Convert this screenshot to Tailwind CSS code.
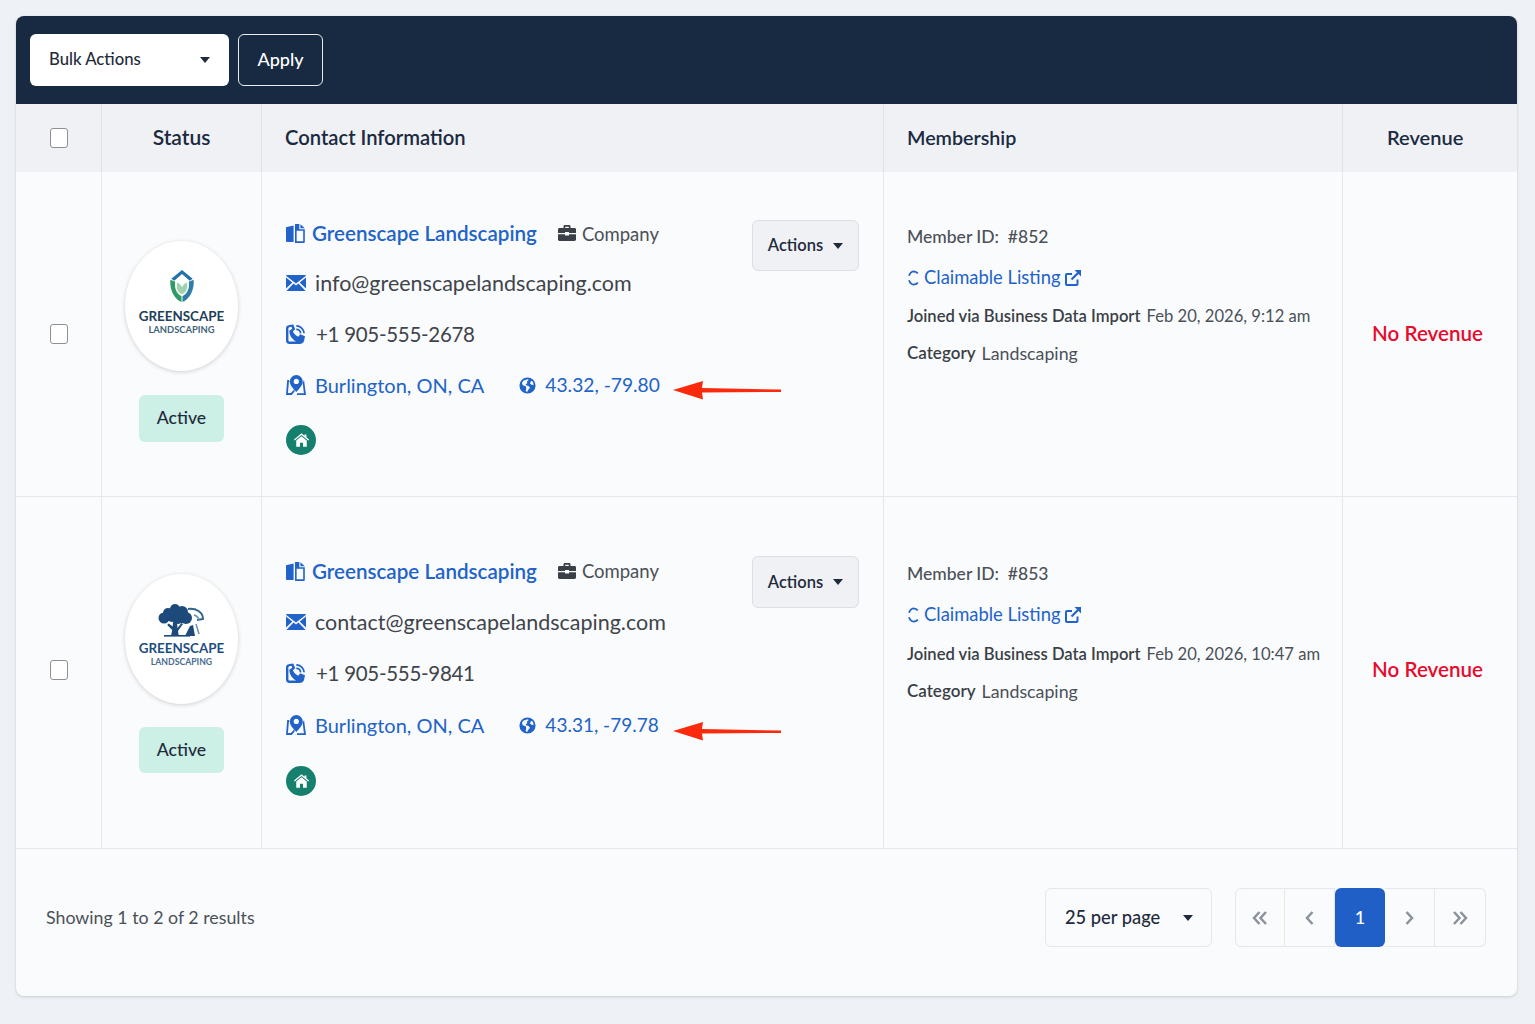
<!DOCTYPE html>
<html><head><meta charset="utf-8"><script src="https://cdn.jsdelivr.net/npm/@tailwindcss/browser@4"></script></head>
<body class="bg-[#eef1f5] [font-family:Lato,sans-serif] text-[#1f2b3c]">
<svg width="0" height="0" class="absolute">
<defs>
<symbol id="biz" viewBox="0 0 20 20"><path fill="currentColor" d="M0 3.500 8 1.500V19H1a1 1 0 0 1-1-1z"/><path fill="currentColor" d="M9.500 0h4.600L14 5.500h5.800V19a1 1 0 0 1-1 1H9.500zM11.200 7.200v11h6.900V7.200z" fill-rule="evenodd"/><path fill="currentColor" d="M15.200.2 19.800 4.400h-4.600z"/></symbol>
<symbol id="mail" viewBox="0 0 20 16"><path fill="currentColor" d="M1 0h18a1 1 0 0 1 1 .8L10 8.600 0 .8A1 1 0 0 1 1 0zM0 2.600l6.300 5L0 13.500zM20 2.600v10.900l-6.300-5.900zM7.500 8.600 10 10.600l2.500-2L19.600 16H.4z"/></symbol>
<symbol id="phone" viewBox="0 0 20 20"><path fill="currentColor" fill-rule="evenodd" d="M3.500 1 7.300.4l1.900 4.900-2.300 1.900c.8 2.300 3 4.600 5.400 5.500l1.900-2.400 4.800 2-.8 3.900c-.5 2.500-2.400 3.800-4.700 3.800H3.500C1.300 20 0 18.700 0 16.500V4.300C0 2.500 1.300 1.300 3.500 1zM2.400 4.400v11.800c0 .9.500 1.400 1.400 1.400h6.400C6 15.500 3.300 11 3.300 6.800l2.900-2.100-.7-1.900c-1.800.2-3.100.6-3.100 1.600z"/><path fill="none" stroke="currentColor" stroke-width="1.800" d="M10.300 1.900a7.800 7.800 0 0 1 7.800 7.400M10.300 5.400a4.200 4.200 0 0 1 4.300 4"/></symbol>
<symbol id="map" viewBox="0 0 20 20"><path fill="currentColor" fill-rule="evenodd" d="M10.300 0a6.500 6.500 0 0 1 6.500 6.500c0 3.800-3.700 7.500-6.500 10.500C7.500 14 3.800 10.300 3.800 6.500A6.500 6.500 0 0 1 10.300 0zm0 3.800a2.600 2.600 0 1 0 0 5.200 2.600 2.600 0 0 0 0-5.200z"/><path fill="currentColor" d="M1.200 5h1.900l.3 2H2.900L1.900 18h3l3-3.200 1 1.300L5.800 20H0zM18 5l2 15h-9v-1.800h6.900L16.700 8z"/></symbol>
<symbol id="globe" viewBox="0 0 20 20"><path fill="currentColor" fill-rule="evenodd" d="M10 .5a9.500 9.500 0 1 1 0 19 9.500 9.500 0 0 1 0-19zM5 4.500 3.500 7l1 2.800 3.500 1.200.5 2.500-.7 3 1.700 1.200 2-3.500 1.500-1.400-1.700-2.200-3-.9-.4-1.500 1.700-.5L9.500 5l2-1.500-1.500-1zM13.500 6l-.5 2 2.500 1.500 1.800-.5-.8-3-2-1.500z"/></symbol>
<symbol id="home" viewBox="0 0 20 18"><path fill="currentColor" d="M10 0 14 3.300V1.500h2.500v3.900L20 8.300l-1 1.300L10 2.300 1 9.600 0 8.300zM10 4l7 5.600V18h-5v-5.500H8V18H3V9.600z"/></symbol>
<symbol id="case" viewBox="0 0 18 16"><path fill="currentColor" fill-rule="evenodd" d="M5.500 3V1.400C5.500.6 6.100 0 6.900 0h4.200c.8 0 1.400.6 1.400 1.400V3h4C17.400 3 18 3.600 18 4.400V8H11V7H7v1H0V4.400C0 3.600.6 3 1.500 3zm1.700 0h3.600V1.700H7.200zM0 9.200h7v1.300h4V9.200h7v5.400c0 .8-.6 1.400-1.500 1.400h-15C.6 16 0 15.400 0 14.600z"/></symbol>
<symbol id="ext" viewBox="0 0 16 16"><path fill="none" stroke="currentColor" stroke-width="2" d="M12.500 9.500V14a1 1 0 0 1-1 1H2a1 1 0 0 1-1-1V5a1 1 0 0 1 1-1h5"/><path fill="none" stroke="currentColor" stroke-width="2.200" d="M6.500 9.500 14 2"/><path fill="currentColor" d="M9.500 0H16v6.500z"/></symbol>
<symbol id="claim" viewBox="0 0 12 16"><path fill="none" stroke="currentColor" stroke-width="1.800" d="M10.800 3.400A5.600 5.600 0 0 0 6.500 1.300C4.700 1.500 3 3 2 5.700M2 10.300c1 2.700 2.700 4.200 4.500 4.400a5.600 5.600 0 0 0 4.300-2.100"/></symbol>
<symbol id="arrow" viewBox="0 0 108 20"><path fill="#fb2a0c" d="M0 10 30 1l-1 7 79 1.500v2.500L29 12.500l1 7z"/></symbol>
</defs>
</svg>
<div class="pl-4 pt-4 h-[1024px]">
<div class="w-[1501px] h-[980px] rounded-lg bg-[#fafbfc] overflow-hidden shadow-[0_1px_3px_rgba(30,40,60,0.18)] flex flex-col">
  <div class="h-[88px] bg-[#182a42] flex items-center pl-[14px] gap-[9px] shrink-0">
    <div class="w-[199px] h-[52px] bg-white rounded-md flex items-center justify-between pl-[19px] pr-[19px] text-[16.7px] font-medium text-[#1f2b3c]"><span>Bulk Actions</span><span class="w-0 h-0 border-x-[5px] border-x-transparent border-t-[6px] border-t-[#1f2b3c]"></span></div>
    <div class="w-[85px] h-[52px] pb-[2px] rounded-md border border-[#e8ebef] text-white flex items-center justify-center text-[18px] font-medium">Apply</div>
  </div>
  <div class="grid grid-cols-[86px_160px_622px_459px_174px] h-[68px] bg-[#eff1f5] text-[#1a2a40] text-[20px] font-semibold shrink-0">
    <div class="border-r border-[#dfe3e9] flex items-center justify-center"><span class="block w-[18px] h-[20px] bg-white rounded-[3px] border-[1.5px] border-[#8c8f94]"></span></div>
    <div class="border-r border-[#dfe3e9] flex items-center justify-center pb-[2px] text-[21px]">Status</div>
    <div class="border-r border-[#dfe3e9] flex items-center pl-[23px] pb-[2px] text-[20.2px]">Contact Information</div>
    <div class="border-r border-[#dfe3e9] flex items-center pl-[23px] pt-[1px] pb-[1px] text-[19.7px]">Membership</div>
    <div class="flex items-center pl-[44px] pb-[2px]">Revenue</div>
  </div>

  <div class="grid grid-cols-[86px_160px_622px_459px_174px] h-[325px] border-b border-[#e4e7ec] shrink-0">
    <div class="border-r border-[#e4e7ec] flex items-center justify-center"><span class="block w-[18px] h-[20px] bg-white rounded-[3px] border-[1.5px] border-[#8c8f94]"></span></div>
    <div class="border-r border-[#e4e7ec] flex flex-col items-center pt-[69px]">
      <div class="w-[113px] h-[130px] rounded-[50%] bg-white shadow-[0_1px_4px_rgba(30,40,60,0.2)] flex flex-col items-center pt-[29px]">
        <svg width="28" height="33" viewBox="0 0 26 34"><path fill="#2172a8" d="M13 0 24 9l-3 2-8-7-8 7-3-2z"/><path fill="#2f9a63" d="M1 10l5 2c-1 6 1 12 6.500 15v6C5 30 0 20 1 10z"/><path fill="#2f7ea8" d="M25 10l-5 2c1 6-1 12-6.500 15v6c7.500-3 12.500-13 11.500-23z"/><path fill="#9fd3ae" d="M13 25c-5-2-6-7-5-12 2 1 4 2 5 5 1-3 3-4 5-5 1 5 0 10-5 12z"/></svg>
        <div class="text-[13.4px] leading-[15px] font-bold text-[#21405a] mt-[6px]">GREENSCAPE</div>
        <div class="text-[9.4px] leading-[11px] font-bold text-[#3f6478]">LANDSCAPING</div>
      </div>
      <div class="mt-[24px] w-[85px] h-[47px] rounded-md bg-[#ccefe6] flex items-center justify-center text-[17.6px] font-medium text-[#1f2b3c]">Active</div>
    </div>
    <div class="border-r border-[#e4e7ec] relative pl-[24px] pt-[46px] whitespace-nowrap">
      <div class="absolute right-[24px] top-[48px] w-[107px] h-[51px] rounded-md border border-[#dadfe6] bg-[#eff1f5] flex items-center justify-center gap-[10px] text-[16.5px] font-semibold">Actions<span class="w-0 h-0 border-x-[5px] border-x-transparent border-t-[6px] border-t-[#1f2b3c]"></span></div>
      <div class="h-[30px] flex items-center"><svg class="w-[19px] h-[19px] text-[#2163c9] mr-[7px]"><use href="#biz"/></svg><span class="text-[#2163c9] text-[20.6px] font-semibold">Greenscape Landscaping</span><svg class="w-[18px] h-[16px] text-[#3b4048] ml-[21px] mr-[6px]"><use href="#case"/></svg><span class="text-[18.5px] text-[#4b5058] pt-[3px]">Company</span></div>
      <div class="h-[30px] mt-[20px] flex items-center text-[21.5px] text-[#40444b]"><svg class="w-[20px] h-[16px] text-[#2163c9] mr-[9px]"><use href="#mail"/></svg>info@greenscapelandscaping.com</div>
      <div class="h-[30px] mt-[21px] flex items-center text-[20.5px] tracking-[-0.3px] text-[#40444b]"><svg class="w-[20px] h-[20px] text-[#2163c9] mr-[10px]"><use href="#phone"/></svg>+1 905-555-2678</div>
      <div class="h-[30px] mt-[21px] flex items-center text-[20px] text-[#2163c9]"><svg class="w-[20px] h-[20px] mr-[9px]"><use href="#map"/></svg>Burlington, ON, CA<svg class="w-[17px] h-[17px] ml-[35px] mr-[9px]"><use href="#globe"/></svg><span class="text-[19.2px] pt-[1px]">43.32, -79.80</span><svg class="w-[108px] h-[20px] ml-[13px] mt-[10px]"><use href="#arrow"/></svg></div>
      <div class="mt-[25px] w-[30px] h-[30px] rounded-full bg-[#16806f] flex items-center justify-center"><svg class="w-[15px] h-[14px] text-white"><use href="#home"/></svg></div>
    </div>
    <div class="border-r border-[#e4e7ec] pl-[23px] pt-[50px] text-[#4b5058] whitespace-nowrap">
      <div class="h-[30px] flex items-center text-[17.5px] font-medium">Member ID:&nbsp; #852</div>
      <div class="h-[30px] mt-[11px] flex items-center text-[18.4px] text-[#2163c9]"><svg class="w-[12px] h-[16px] mr-[5px]"><use href="#claim"/></svg>Claimable Listing<svg class="w-[16px] h-[16px] ml-[5px]"><use href="#ext"/></svg></div>
      <div class="h-[30px] mt-[8px] flex items-center text-[16.6px]"><span class="font-semibold text-[#3a3f47]">Joined via Business Data Import</span><span class="ml-[6px]">Feb 20, 2026, 9:12 am</span></div>
      <div class="h-[30px] mt-[7px] flex items-center"><span class="text-[17px] font-semibold text-[#3a3f47]">Category</span><span class="ml-[6px] text-[17.8px]">Landscaping</span></div>
    </div>
    <div class="flex items-center justify-end pr-[34px] -mt-[2px] text-[20.6px] font-semibold text-[#e8092e]">No Revenue</div>
  </div>

  <div class="grid grid-cols-[86px_160px_622px_459px_174px] h-[352px] border-b border-[#e4e7ec] shrink-0">
    <div class="border-r border-[#e4e7ec] flex items-center justify-center -mt-[6px]"><span class="block w-[18px] h-[20px] bg-white rounded-[3px] border-[1.5px] border-[#8c8f94]"></span></div>
    <div class="border-r border-[#e4e7ec] flex flex-col items-center pt-[77px]">
      <div class="w-[113px] h-[130px] rounded-[50%] bg-white shadow-[0_1px_4px_rgba(30,40,60,0.2)] flex flex-col items-center pt-[30px]">
        <svg width="48" height="35" viewBox="0 0 48 35"><g fill="#1d4a7a"><circle cx="17" cy="5" r="5"/><circle cx="10" cy="9" r="5"/><circle cx="24" cy="8" r="6"/><circle cx="6" cy="14" r="5.500"/><circle cx="14" cy="12" r="6"/><circle cx="28" cy="14" r="6"/><circle cx="20" cy="14" r="6"/><path d="M15 18h4l.5 6 4-5 1.500 1-5 7 .8 5H13l1.200-6-5-5 1.500-1.500 4 3z"/><rect x="6" y="31" width="26" height="1.600"/><path d="M27 32l5-10 3-1 2 11z"/></g><path fill="none" stroke="#2a6595" stroke-width="2" d="M30 5c8-1 15 3 15 10l-6 1"/><path fill="none" stroke="#6a90b0" stroke-width="1.500" d="M36 11c3 1 5 3 5 6M38 20l3 10"/></svg>
        <div class="text-[13.4px] leading-[15px] font-bold text-[#1f4f80] mt-[2px]">GREENSCAPE</div>
        <div class="text-[8.700px] leading-[11px] font-bold text-[#4a6c90]">LANDSCAPING</div>
      </div>
      <div class="mt-[23px] w-[85px] h-[46px] rounded-md bg-[#ccefe6] flex items-center justify-center text-[17.6px] font-medium text-[#1f2b3c]">Active</div>
    </div>
    <div class="border-r border-[#e4e7ec] relative pl-[24px] pt-[59px] whitespace-nowrap">
      <div class="absolute right-[24px] top-[59px] w-[107px] h-[52px] rounded-md border border-[#dadfe6] bg-[#eff1f5] flex items-center justify-center gap-[10px] text-[16.5px] font-semibold">Actions<span class="w-0 h-0 border-x-[5px] border-x-transparent border-t-[6px] border-t-[#1f2b3c]"></span></div>
      <div class="h-[30px] flex items-center"><svg class="w-[19px] h-[19px] text-[#2163c9] mr-[7px]"><use href="#biz"/></svg><span class="text-[#2163c9] text-[20.6px] font-semibold">Greenscape Landscaping</span><svg class="w-[18px] h-[16px] text-[#3b4048] ml-[21px] mr-[6px]"><use href="#case"/></svg><span class="text-[18.5px] text-[#4b5058] pt-[2px]">Company</span></div>
      <div class="h-[30px] mt-[21px] flex items-center text-[21.5px] text-[#40444b]"><svg class="w-[20px] h-[16px] text-[#2163c9] mr-[9px]"><use href="#mail"/></svg>contact@greenscapelandscaping.com</div>
      <div class="h-[30px] mt-[21px] flex items-center text-[20.5px] tracking-[-0.3px] text-[#40444b]"><svg class="w-[20px] h-[20px] text-[#2163c9] mr-[10px]"><use href="#phone"/></svg>+1 905-555-9841</div>
      <div class="h-[30px] mt-[22px] flex items-center text-[20px] text-[#2163c9]"><svg class="w-[20px] h-[20px] mr-[9px]"><use href="#map"/></svg>Burlington, ON, CA<svg class="w-[17px] h-[17px] ml-[35px] mr-[9px]"><use href="#globe"/></svg><span class="text-[19px]">43.31, -79.78</span><svg class="w-[108px] h-[20px] ml-[14px] mt-[12px]"><use href="#arrow"/></svg></div>
      <div class="mt-[26px] w-[30px] h-[30px] rounded-full bg-[#16806f] flex items-center justify-center"><svg class="w-[15px] h-[14px] text-white"><use href="#home"/></svg></div>
    </div>
    <div class="border-r border-[#e4e7ec] pl-[23px] pt-[62px] text-[#4b5058] whitespace-nowrap">
      <div class="h-[30px] flex items-center text-[17.5px] font-medium">Member ID:&nbsp; #853</div>
      <div class="h-[30px] mt-[11px] flex items-center text-[18.4px] text-[#2163c9]"><svg class="w-[12px] h-[16px] mr-[5px]"><use href="#claim"/></svg>Claimable Listing<svg class="w-[16px] h-[16px] ml-[5px]"><use href="#ext"/></svg></div>
      <div class="h-[30px] mt-[9px] flex items-center text-[16.6px]"><span class="font-semibold text-[#3a3f47]">Joined via Business Data Import</span><span class="ml-[6px]">Feb 20, 2026, 10:47 am</span></div>
      <div class="h-[30px] mt-[7px] flex items-center"><span class="text-[17px] font-semibold text-[#3a3f47]">Category</span><span class="ml-[6px] text-[17.8px]">Landscaping</span></div>
    </div>
    <div class="flex items-center justify-end pr-[34px] -mt-[6px] text-[20.6px] font-semibold text-[#e8092e]">No Revenue</div>
  </div>

  <div class="flex-1 flex items-center justify-between pl-[30px] pr-[31px] pb-[10px]">
    <div class="text-[17.8px] text-[#4b5058]">Showing 1 to 2 of 2 results</div>
    <div class="flex items-center gap-[23px]">
      <div class="w-[167px] h-[59px] rounded-md border border-[#e4e7ec] flex items-center justify-between pl-[19px] pr-[18px] text-[18.3px] font-medium text-[#1f2b3c]">25 per page<span class="w-0 h-0 border-x-[5px] border-x-transparent border-t-[6px] border-t-[#1f2b3c]"></span></div>
      <div class="flex h-[59px]">
        <div class="w-[50px] rounded-l-md border border-[#e4e7ec] flex items-center justify-center"><svg width="16" height="14" viewBox="0 0 16 14" fill="none" stroke="#8b929c" stroke-width="2.500"><path d="M7.500 1 2 7l5.500 6M14 1 8.500 7l5.500 6"/></svg></div>
        <div class="w-[50px] border-y border-r border-[#e4e7ec] flex items-center justify-center"><svg width="9" height="14" viewBox="0 0 9 14" fill="none" stroke="#8b929c" stroke-width="2.500"><path d="M7.500 1 2 7l5.500 6"/></svg></div>
        <div class="w-[50px] rounded-md bg-[#2060c6] text-white flex items-center justify-center text-[18px] font-medium">1</div>
        <div class="w-[50px] border-y border-r border-[#e4e7ec] flex items-center justify-center"><svg width="9" height="14" viewBox="0 0 9 14" fill="none" stroke="#8b929c" stroke-width="2.500"><path d="M1.500 1 7 7l-5.500 6"/></svg></div>
        <div class="w-[51px] rounded-r-md border-y border-r border-[#e4e7ec] flex items-center justify-center"><svg width="16" height="14" viewBox="0 0 16 14" fill="none" stroke="#8b929c" stroke-width="2.500"><path d="M2 1l5.500 6L2 13M8.500 1 14 7l-5.500 6"/></svg></div>
      </div>
    </div>
  </div>
</div>
</div>
</body></html>
